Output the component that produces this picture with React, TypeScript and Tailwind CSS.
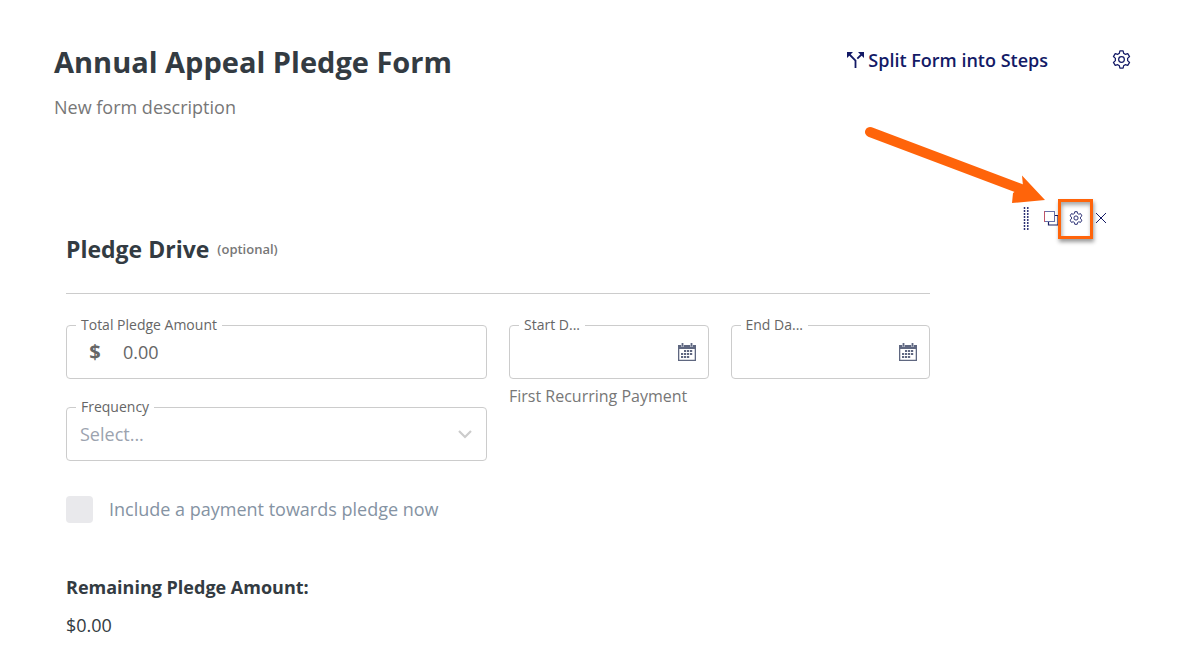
import { ReactNode, useState } from "react";

const GearIcon = ({ size }: { size: number }) => (
  <svg width={size} height={size} viewBox="0 0 20 20" fill="none" stroke="currentColor" strokeWidth="1.3" strokeLinejoin="round">
    <path d="M8.300 1h3.400l.6 2.600q.9.300 1.600 1l2.700-.8 1.900 3.100-2.100 1.900q.2 1.200 0 2.400l2.100 1.900-1.900 3.100-2.700-.8q-.7.7-1.600 1l-.6 2.600H8.300l-.6-2.600q-.9-.3-1.600-1l-2.700.8-1.900-3.100 2.100-1.900q-.2-1.200 0-2.400L1.500 6.900l1.900-3.100 2.700.8q.7-.7 1.600-1z" />
    <circle cx="10" cy="10" r="3" />
  </svg>
);

const SplitIcon = () => (
  <svg width="17" height="17" viewBox="0 0 17 17" fill="none">
    <path d="M0 0h6L0 6zM17 0h-6l6 6z" fill="currentColor" />
    <path d="M2.500 2.500 8.500 8.500V16M14.500 2.500 10.300 6.700" stroke="currentColor" strokeWidth="1.800" />
  </svg>
);

const CalendarIcon = () => (
  <svg width="18" height="18" viewBox="0 0 18 18" fill="#5f6780">
    <path d="M0 2h18v16H0zM1.300 6v10.700h15.400V6z" fillRule="evenodd" />
    <path d="M4.500 0v4M13.500 0v4" stroke="#c5c9d4" strokeWidth="2.600" />
    <path d="M4.500 0v3.400M13.500 0v3.400" stroke="#5f6780" strokeWidth="1.300" />
    <path d="M6 8h9M3 11h12M3 14h9" stroke="#5f6780" strokeWidth="2" strokeDasharray="2.200 .8" />
  </svg>
);

const DragIcon = () => (
  <svg width="8" height="24" viewBox="0 0 8 24" fill="currentColor">
    {[1, 4, 7, 10, 13, 16, 19, 22].map((y) => (
      <g key={y}>
        <circle cx="2.500" cy={y} r=".9" />
        <circle cx="5.800" cy={y} r=".9" />
      </g>
    ))}
  </svg>
);

const CopyIcon = () => (
  <svg width="15" height="15" viewBox="0 0 15 15" fill="none">
    <path d="M11 4.500h3v9.500H4.500V11" stroke="#1b2064" strokeWidth="1.200" />
    <rect x=".5" y=".5" width="10" height="10" fill="#fff" stroke="#6670a8" />
    <path d="M.5 0v11" stroke="#c0566a" />
  </svg>
);

const Field = ({ id, label, children }: { id: string; label: string; children: ReactNode }) => (
  <div className="relative flex h-[54px] min-w-0 items-center rounded border border-[#cccccc] text-[#666666]">
    <label htmlFor={id} className="absolute -top-[11px] left-[9px] bg-white px-[5px] text-sm leading-5">
      {label}
    </label>
    {children}
  </div>
);

const DateField = ({ id, label }: { id: string; label: string }) => (
  <Field id={id} label={label}>
    <input id={id} type="text" className="h-full min-w-0 flex-1 bg-transparent pl-3 text-lg outline-none" />
    <button type="button" aria-label="Open calendar" className="mr-3">
      <CalendarIcon />
    </button>
  </Field>
);

const BlockToolbar = () => (
  <div className="flex h-10 items-center justify-end text-[#151b66]">
    <button type="button" aria-label="Move" className="mr-[14px]">
      <DragIcon />
    </button>
    <button type="button" aria-label="Duplicate" className="pb-[2px]">
      <CopyIcon />
    </button>
    <div className="relative -ml-px">
      <button
        type="button"
        aria-label="Block settings"
        className="flex h-10 w-[35px] items-center justify-center border-3 border-[#ff640a] pb-[2px] shadow-[1px_3px_4px_rgba(0,0,0,0.4),inset_1px_3px_4px_rgba(0,0,0,0.35)]"
      >
        <GearIcon size={14} />
      </button>
      <svg className="pointer-events-none absolute right-12 bottom-[33px]" width="182" height="80" viewBox="0 0 182 80">
        <path d="M7 6 158 63" stroke="#ff640a" strokeWidth="10" strokeLinecap="round" />
        <path d="M182 74 159 49.500 160 60 150 67 149 77z" fill="#ff640a" />
      </svg>
    </div>
    <button type="button" aria-label="Remove" className="ml-[2px] pb-[2px]">
      <svg width="12" height="12" viewBox="0 0 12 12" stroke="currentColor" strokeWidth="1">
        <path d="M1 1l10 10M11 1 1 11" />
      </svg>
    </button>
  </div>
);

export default function App() {
  const [amount, setAmount] = useState("0.00");
  const [include, setInclude] = useState(false);

  return (
    <main className="bg-white pt-10 pr-[46px] pb-4 pl-[54px] font-['Open_Sans',sans-serif] text-[#333b42]">
      <header className="flex items-start justify-between">
        <div>
          <h1 className="text-[29px] leading-[44px] font-bold">Annual Appeal Pledge Form</h1>
          <p className="mt-[9px] text-lg leading-7 text-[#777777]">New form description</p>
        </div>
        <div className="flex h-10 items-center text-[#131a66]">
          <button type="button" className="flex items-center gap-1 text-lg font-semibold">
            <SplitIcon />
            Split Form into Steps
          </button>
          <button type="button" aria-label="Form settings" className="ml-16 pb-[2px]">
            <GearIcon size={19} />
          </button>
        </div>
      </header>

      <section className="mt-[78px] pr-6 pl-3">
        <BlockToolbar />
        <div className="mr-[177px]">
          <div className="flex h-[55px] items-start gap-2 border-b border-[#cccccc]">
            <h2 className="-mt-2 text-[23px] leading-9 font-bold">Pledge Drive</h2>
            <span className="text-[13px] leading-5 font-semibold text-[#777777]">(optional)</span>
          </div>

          <div className="mt-[31px] grid grid-cols-[minmax(0,420fr)_minmax(0,199fr)_minmax(0,199fr)] items-start gap-x-[22px] gap-y-7">
            <Field id="amount" label="Total Pledge Amount">
              <span className="w-14 text-center text-xl font-bold">$</span>
              <input
                id="amount"
                type="text"
                value={amount}
                onChange={(e) => setAmount(e.target.value)}
                className="h-full min-w-0 flex-1 bg-transparent text-lg outline-none"
              />
            </Field>
            <div className="row-span-2">
              <DateField id="start" label="Start D..." />
              <p className="mt-[5px] text-base leading-6 text-[#777777]">First Recurring Payment</p>
            </div>
            <DateField id="end" label="End Da..." />
            <Field id="frequency" label="Frequency">
              <select id="frequency" className="h-full w-full appearance-none bg-transparent pl-[13px] text-lg text-[#9ca3af] outline-none">
                <option>Select...</option>
              </select>
              <svg className="pointer-events-none absolute right-[14px]" width="14" height="9" viewBox="0 0 14 9" fill="none" stroke="#cccccc" strokeWidth="2.200">
                <path d="M1 1l6 6 6-6" />
              </svg>
            </Field>
          </div>

          <label className="mt-[34px] flex items-center gap-4 text-lg text-[#8593a3]">
            <input
              type="checkbox"
              checked={include}
              onChange={(e) => setInclude(e.target.checked)}
              className="size-[27px] appearance-none rounded bg-[#e9e9ec] checked:bg-[#131a66]"
            />
            Include a payment towards pledge now
          </label>

          <p className="mt-[50px] text-lg leading-7 font-bold">Remaining Pledge Amount:</p>
          <p className="mt-[10px] text-lg leading-7">$0.00</p>
        </div>
      </section>
    </main>
  );
}
